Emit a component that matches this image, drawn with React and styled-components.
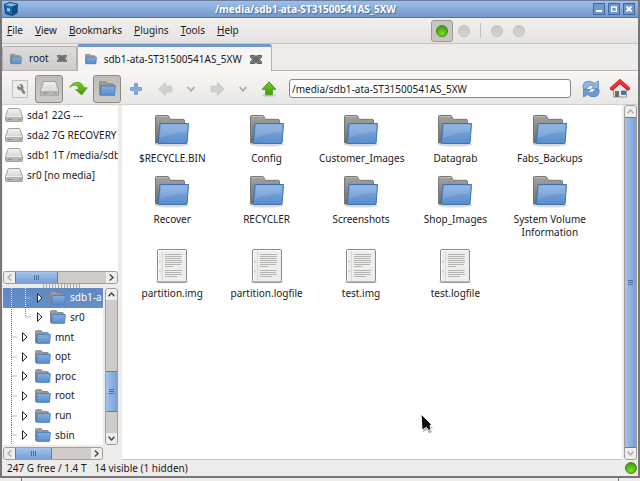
import React, { useState } from 'react';
import styled, { createGlobalStyle, css } from 'styled-components';

const GlobalStyle = createGlobalStyle`
  * {
    box-sizing: border-box;
  }

  body {
    margin: 0;
    background: #edeceb;
    color: #1a1a1a;
    font: 10px/13px "Noto Sans", "Open Sans", sans-serif;
  }

  button, input {
    font: inherit;
    color: inherit;
    margin: 0;
    padding: 0;
  }

  svg {
    display: block;
    flex: none;
  }
`;

const Window = styled.div`
  height: 100vh;
  display: flex;
  flex-direction: column;
  overflow: hidden;
`;

const Frame = styled.div`
  flex: 1;
  min-height: 0;
  display: flex;
  flex-direction: column;
  border: solid #77777b;
  border-width: 0 2px 2px;
`;

const TitleBar = styled.header`
  height: 18px;
  display: flex;
  align-items: center;
  padding: 0 3px 0 2px;
  background: linear-gradient(#9dbfe9, #7299cb);
  border-top: 1px solid #6a7d9a;
  border-bottom: 1px solid #5576a5;
`;

const Title = styled.h1`
  flex: 1;
  margin: 0;
  font-size: 10px;
  line-height: 16px;
  font-weight: 700;
  text-align: center;
  color: #fff;
  text-shadow: 1px 1px 1px #4668a0;
`;

const WindowButtons = styled.div`
  display: flex;
  gap: 3px;
`;

const WindowButton = styled.button`
  width: 12px;
  height: 12px;
  display: flex;
  align-items: center;
  justify-content: center;
  background: #7198cd;
  border: 1px solid #3f66a0;
`;

const MenuBar = styled.nav`
  height: 26px;
  display: flex;
  align-items: center;
  background: linear-gradient(#f1f0ef, #e4e3e2);
  border-bottom: 1px solid #c5c3c1;
`;

const MenuList = styled.div`
  width: 429px;
  display: flex;
  gap: 12px;
  padding-left: 5px;
`;

const MenuButton = styled.button`
  background: none;
  border: 0;

  &::first-letter {
    text-decoration: underline;
  }
`;

const DotButton = styled.button`
  width: 22px;
  height: 22px;
  display: flex;
  align-items: center;
  justify-content: center;
  border: 1px solid ${(p) => (p.$on ? '#9c9894' : 'transparent')};
  border-radius: 3px;
  background: ${(p) => (p.$on ? '#c9c5c2' : 'none')};
`;

const Dot = styled.span`
  width: 12px;
  height: 12px;
  border-radius: 50%;
  ${(p) => (p.$on ? css`
    background: radial-gradient(circle at 50% 75%, #7be014, #4fae10 60%, #3c8b12);
    border: 1px solid #3f8a1c;
  ` : css`
    background: linear-gradient(#c6c8c4, #d3d5d1);
    border: 1px solid #c0c2be;
  `)}
`;

const Separator = styled.span`
  width: 1px;
  height: 15px;
  margin: 0 5px;
  background: #c2c0be;
`;

const TabStrip = styled.div`
  height: 27px;
  display: flex;
  align-items: flex-end;
  background: #edeceb;
  border-bottom: 1px solid #b7b0ac;
`;

const Tab = styled.div`
  display: flex;
  align-items: center;
  gap: 8px;
  padding: 0 9px 0 7px;
  height: 24px;
  border: 1px solid #b7b0ac;
  border-bottom: 0;
  border-radius: 3px 3px 0 0;
  background: linear-gradient(#dddbd9, #cfcccb);

  ${(p) => p.$active && css`
    height: 27px;
    margin-bottom: -1px;
    padding: 0 9px 0 7px;
    background: #f6f5f4;
    border-top: 3px solid #7499cc;
  `}
`;

const TabLabel = styled.button`
  display: flex;
  align-items: center;
  gap: 7px;
  background: none;
  border: 0;
`;

const CloseButton = styled.button`
  background: none;
  border: 0;
`;

const Toolbar = styled.div`
  height: 34px;
  display: flex;
  align-items: center;
  gap: 1px;
  padding: 2px 4px 0;
  background: linear-gradient(#f8f7f6, #e8e7e6);
  border-bottom: 1px solid #d2d0ce;
`;

const ToolButton = styled.button`
  flex: none;
  width: ${(p) => (p.$narrow ? 22 : 28)}px;
  height: 28px;
  display: flex;
  align-items: center;
  justify-content: center;
  border: 1px solid ${(p) => (p.$on ? '#8f8a86' : 'transparent')};
  border-radius: 3px;
  background: ${(p) => (p.$on ? 'linear-gradient(#bfbbb8, #cecbc9)' : 'none')};
`;

const PathInput = styled.input`
  flex: 1;
  min-width: 0;
  height: 19px;
  margin: 0 5px;
  padding: 0 2px;
  background: #fff;
  border: 1px solid #8b8784;
  border-radius: 3px;
  outline: none;
`;

const Body = styled.div`
  flex: 1;
  min-height: 0;
  display: grid;
  grid-template-columns: 115px minmax(0, 1fr) auto;
  padding: 0 1px;
`;

const Sidebar = styled.aside`
  display: grid;
  grid-template-columns: minmax(0, 1fr);
  grid-template-rows: 51fr 4px 49fr;
  min-height: 0;
`;

const Grip = styled.div`
  width: 38px;
  margin: 0 auto;
  background: radial-gradient(circle, #aaa7a5 1px, transparent 1px) 0 0 / 3px 2px;
`;

const Pane = styled.section`
  display: flex;
  flex-direction: column;
  min-height: 0;
`;

const DeviceList = styled.ul`
  flex: 1;
  margin: 0;
  padding: 0;
  list-style: none;
  background: #fff;
  overflow: hidden;
`;

const Device = styled.li`
  height: 20px;
  display: flex;
  align-items: center;
  gap: 4px;
  padding-left: 2px;
  white-space: nowrap;
`;

const TreeArea = styled.div`
  display: grid;
  grid-template-columns: minmax(0, 1fr) 13px;
  grid-template-rows: minmax(0, 1fr) 13px;
  gap: 2px;
  min-height: 0;
`;

const Tree = styled.ul`
  margin: 0;
  padding: 0;
  list-style: none;
  display: grid;
  grid-template-columns: minmax(0, 1fr);
  grid-auto-rows: minmax(0, 1fr);
  background: #fff;
  overflow: hidden;
`;

const TreeRow = styled.li`
  display: flex;
  align-items: center;
  overflow: hidden;
  white-space: nowrap;
  color: ${(p) => (p.$selected ? '#fff' : 'inherit')};
  background: ${(p) => (p.$selected ? 'linear-gradient(#6089c4, #648ec8)' : 'none')};
`;

const TreeLabel = styled.span`
  margin-left: 4px;
`;

const FilePane = styled.main`
  position: relative;
  margin-left: 4px;
  margin-right: 2px;
  padding: 9px 25px 0 3px;
  background: #fff;
  border-bottom: 1px solid #c8c6c4;
`;

const FileGrid = styled.ul`
  margin: 0;
  padding: 0;
  list-style: none;
  display: grid;
  grid-template-columns: repeat(5, 1fr);
  row-gap: 10px;
`;

const FileItem = styled.li`
  display: flex;
  flex-direction: column;
  align-items: center;
  gap: 4px;
  text-align: center;
`;

const FileName = styled.span`
  max-width: 84px;
`;

const Pointer = styled.svg`
  position: absolute;
  left: 298px;
  top: 308px;
`;

const ScrollTrack = styled.div`
  display: flex;
  flex-direction: ${(p) => (p.$vertical ? 'column' : 'row')};
  ${(p) => (p.$vertical ? 'width' : 'height')}: 13px;
  background: #cecbc9;
  border: 1px solid #a29d99;
  border-radius: 3px;
  overflow: hidden;
`;

const ScrollButton = styled.button`
  flex: 0 0 11px;
  display: flex;
  align-items: center;
  justify-content: center;
  background: #efeeed;
  border: 0;
`;

const ScrollGap = styled.div`
  flex: ${(p) => p.$size};
`;

const ScrollThumb = styled.div`
  flex: ${(p) => p.$size};
  display: flex;
  align-items: center;
  justify-content: center;
  background: linear-gradient(${(p) => (p.$vertical ? 'to right' : 'to bottom')}, #a5c3ed, #789fd3);
  border: 1px solid #567fb8;
  ${(p) => (p.$vertical ? 'border-left: 0; border-right: 0;' : 'border-top: 0; border-bottom: 0;')}
`;

const StatusBar = styled.footer`
  height: 16px;
  display: flex;
  align-items: center;
  gap: 8px;
  padding: 0 1px 0 5px;
  background: #edeceb;
`;

const StatusDot = styled(Dot)`
  margin-left: auto;
`;

const Taskbar = styled.div`
  height: 3px;
  display: flex;
  justify-content: space-between;
  padding: 0 21px;
  background: #edeceb;
`;

const TaskbarMark = styled.span`
  width: 1px;
  background: #77777b;
`;

const Defs = styled.svg`
  position: absolute;
`;

const Gradients = () => (
  <Defs width="0" height="0" aria-hidden="true">
    <defs>
      <linearGradient id="blue" x1="0" y1="0" x2="0" y2="1">
        <stop offset="0" stopColor="#86aee0" />
        <stop offset="1" stopColor="#588dcb" />
      </linearGradient>
      <linearGradient id="grey" x1="0" y1="0" x2="0" y2="1">
        <stop offset="0" stopColor="#a3a3a1" />
        <stop offset="1" stopColor="#6c6c6a" />
      </linearGradient>
      <linearGradient id="metal" x1="0" y1="0" x2="0" y2="1">
        <stop offset="0" stopColor="#f4f4f3" />
        <stop offset="1" stopColor="#c4c4c2" />
      </linearGradient>
      <linearGradient id="green" x1="0" y1="0" x2="0" y2="1">
        <stop offset="0" stopColor="#79cc28" />
        <stop offset="1" stopColor="#3f980b" />
      </linearGradient>
    </defs>
  </Defs>
);

const SmallFolder = ({ size = 16 }) => (
  <svg width={size} height={size} viewBox="0 0 16 16">
    <path d="M.5 13.5v-11q0-.8.8-.8h5l1.4 1.8h4.8q.8 0 .8.8v9.2z" fill="url(#grey)" stroke="#878785" />
    <path d="M2.3 5.5h13l-.8 8.8H1.6z" fill="url(#blue)" stroke="#5184c2" />
  </svg>
);

const BigFolder = () => (
  <svg width="36" height="34" viewBox="0 0 36 34">
    <ellipse cx="18" cy="30.500" rx="17" ry="2" fill="#000" opacity=".15" />
    <path d="M1.500 29v-26.500q0-1 1-1h11q1 0 1.300.8l.9 2.200q.4.8 1.300.8h12q1.500 0 1.500 1.500v22z" fill="url(#grey)" stroke="#777775" />
    <path d="M2.500 2.500h11" stroke="#b9b9b7" />
    <path d="M6 9.500h28.500l-1.400 19.200q-.1.8-1 .8H5q-.9 0-.8-.8z" fill="url(#blue)" stroke="#3f72b4" />
    <path d="M7 11h26.300l-.5 7q-14 .5-26.700 6z" fill="#fff" opacity=".13" />
  </svg>
);

const DocumentIcon = () => (
  <svg width="32" height="34" viewBox="0 0 32 34">
    <ellipse cx="16" cy="33" rx="16" ry="1.300" fill="#000" opacity=".35" />
    <rect x="1.500" y=".5" width="29" height="32.500" rx="1.500" fill="#eeeeed" stroke="#888886" />
    <path d="M2.500 32V1.500h27" fill="none" stroke="#fff" />
    <path d="M6.500 2v30" stroke="#d8d8d6" />
    <path d="M4 11.500v2M4 21.500v2" stroke="#aaa" />
    <path d="M9 5.500h17M9 7.500h17M9 9.500h16M9 11.500h17M9 13.500h17M9 15.500h16M9 17.500h8M9 21.500h17M9 23.500h16M9 25.500h17M9 27.500h12" stroke="#b4b4b2" />
  </svg>
);

const DriveIcon = ({ size = 18 }) => (
  <svg width={size} height={size * 14 / 18} viewBox="0 0 18 14">
    <path d="M4 .5h10q.8 0 1 .8l2.500 7.400v4.100q0 .7-.7.7H1.200q-.7 0-.7-.7V8.700L3 1.300Q3.200.5 4 .5z" fill="url(#metal)" stroke="#a2a2a0" />
    <path d="M1 9h16v4H1z" fill="#b5b5b3" />
    <path d="M1 8.500h16" stroke="#eee" />
    <path d="M3 11.500h4M14 11.500h1.500" stroke="#8c8c8a" />
  </svg>
);

const AppIcon = () => (
  <svg width="14" height="14" viewBox="0 0 14 14">
    <path d="M.5 2.500 6 .5l7.500 1.500-.5 9-5 2.500-6.500-2z" fill="#1c66a8" stroke="#134370" />
    <path d="M1 3l7 1.500 5-2.200L6 1z" fill="#7db9e6" />
    <path d="M8 5l5-2.200-.4 7.800L8 13z" fill="#124a83" />
    <path d="M3 6l3 .6v3L3 9z" fill="#8cc7ef" />
  </svg>
);

const CloseIcon = ({ size }) => (
  <svg width={size} height={size - 3} viewBox="0 0 12 9" preserveAspectRatio="none">
    <path d="M.5.5h4L6 1.500 7.500.5h4V2L9.500 4.500l2 2.500v1.500h-4L6 7.500 4.500 8.500h-4V7l2-2.500L.5 2z" fill="#858583" stroke="#5c5c5a" />
    <path d="M3 2l6 5M9 2 3 7" stroke="#666664" strokeWidth="2" />
  </svg>
);

const WrenchIcon = () => (
  <svg width="16" height="18" viewBox="0 0 16 18">
    <rect x=".5" y=".5" width="15" height="17" fill="#ececeb" stroke="#c2c0be" />
    <path d="M5.500 5.500 8 7.500 9 6.500 7 4q4-.5 4.500 3 0 1-.4 2l2 3q.5 1.500-.6 2-1.100.3-1.900-.7L9 10.200q-3.500.3-4-2.700 0-1 .5-2z" fill="#858583" />
  </svg>
);

const JumpIcon = () => (
  <svg width="19" height="16" viewBox="0 0 19 16">
    <path d="M.7 6.500C3 .8 12.200-1.500 15 6.800h3.300L12.700 14 6.500 8.500h3.200C9.500 3.500 4.500 3 .7 6.500z" fill="url(#green)" stroke="#51a61b" strokeWidth=".8" />
  </svg>
);

const PlusIcon = () => (
  <svg width="12" height="12" viewBox="0 0 12 12">
    <path d="M4.500.5h3v4h4v3h-4v4h-3v-4h-4v-3h4z" fill="#84abdd" stroke="#7da3d6" />
  </svg>
);

const ArrowIcon = ({ flip }) => (
  <svg width="15" height="14" viewBox="0 0 15 14">
    <path d="M.8 7 7.500.8v3.400h6.300v5.600H7.500v3.400z" fill="#cfd3cc" stroke="#c4c9c1" transform={flip ? 'rotate(180 7.5 7)' : undefined} />
  </svg>
);

const UpIcon = () => (
  <svg width="16" height="16" viewBox="0 0 16 16">
    <ellipse cx="8" cy="14.500" rx="7" ry="1.500" fill="#000" opacity=".13" />
    <path d="M8 .8l6.800 7.500h-3.500v5.500H4.700V8.300H1.200z" fill="url(#green)" stroke="#469c14" />
  </svg>
);

const ReloadIcon = () => (
  <svg width="18" height="18" viewBox="0 0 18 18">
    <path d="M1 8.500V5.500Q1.500 1.500 6 1.200q4-.2 6.500 2.300L16.500 1v7.500H9.500l2.200-2.300Q7.500 3.500 5 8.500z" fill="#8db3e3" stroke="#5a8cc8" strokeWidth=".8" />
    <path d="M17 9.500v3q-.5 4-5 4.300-4 .2-6.500-2.300L1.500 17V9.500h7L6.300 11.800q4.200 2.700 6.700-2.300z" fill="#6e9ad2" stroke="#487cb9" strokeWidth=".8" />
  </svg>
);

const HomeIcon = () => (
  <svg width="20" height="19" viewBox="0 0 20 19">
    <path d="M3.500 9.500 10 4l6.500 5.500v8.500h-13z" fill="#e8e8e6" stroke="#999" />
    <path d="M5 12h4v6H5z" fill="#716c61" />
    <path d="M11.500 12h4v3.500h-4z" fill="#4479bd" stroke="#285486" strokeWidth=".6" />
    <path d="M2 9.500 10 2.500l8 7" fill="none" stroke="#c8191d" strokeWidth="4" strokeLinecap="round" />
    <path d="M2 9 10 2l8 7" fill="none" stroke="#ee3535" strokeWidth="2.500" strokeLinecap="round" />
  </svg>
);

const turns = { up: 180, down: 0, left: 90, right: -90 };

const Chevron = ({ dir = 'down', color = '#444', size = 7 }) => (
  <svg width={size} height={size} viewBox="0 0 6 6">
    <path d="M.5 1.500 3 4.300l2.500-2.800" fill="none" stroke={color} strokeWidth="1.200" transform={`rotate(${turns[dir]} 3 3)`} />
  </svg>
);

const ThumbGrip = ({ vertical }) => (
  <svg width="7" height="7" viewBox="0 0 7 7">
    <path d="M1.500 1v5M3.500 1v5M5.500 1v5" stroke="#466fa9" transform={vertical ? 'rotate(90 3.5 3.5)' : undefined} />
  </svg>
);

// dotted guide lines and the expander arrow in front of each tree entry
const Branch = ({ nested, last, selected }) => {
  const line = { stroke: selected ? '#dde6f4' : '#777', strokeDasharray: '1 1' };
  return (
    <svg width={nested ? 47 : 32} height="20" viewBox={`0 0 ${nested ? 47 : 32} 20`}>
      <path d="M8.500 0v20" {...line} />
      {nested && <path d={last ? 'M22.500 0v10h6' : 'M22.500 0v20M22.500 10h6'} fill="none" {...line} />}
      {!nested && <path d="M8.500 10h6" {...line} />}
      <path
        d="M.5.7v8.600L5 5z"
        fill="#fff"
        stroke="#222"
        transform={`translate(${nested ? 34 : 19} 5)`}
      />
    </svg>
  );
};

const Scrollbar = ({ vertical, before, thumb, after, startColor = '#444', endColor = '#444' }) => (
  <ScrollTrack $vertical={vertical}>
    <ScrollButton aria-label={vertical ? 'Scroll up' : 'Scroll left'}>
      <Chevron dir={vertical ? 'up' : 'left'} color={startColor} />
    </ScrollButton>
    <ScrollGap $size={before} />
    <ScrollThumb $size={thumb} $vertical={vertical}>
      <ThumbGrip vertical={vertical} />
    </ScrollThumb>
    <ScrollGap $size={after} />
    <ScrollButton aria-label={vertical ? 'Scroll down' : 'Scroll right'}>
      <Chevron dir={vertical ? 'down' : 'right'} color={endColor} />
    </ScrollButton>
  </ScrollTrack>
);

const menus = ['File', 'View', 'Bookmarks', 'Plugins', 'Tools', 'Help'];

const devices = ['sda1 22G ---', 'sda2 7G RECOVERY', 'sdb1 1T /media/sdb', 'sr0 [no media]'];

const tree = [
  { name: 'sdb1-a', nested: true, selected: true },
  { name: 'sr0', nested: true, last: true },
  { name: 'mnt' },
  { name: 'opt' },
  { name: 'proc' },
  { name: 'root' },
  { name: 'run' },
  { name: 'sbin' },
];

const folders = [
  '$RECYCLE.BIN', 'Config', 'Customer_Images', 'Datagrab', 'Fabs_Backups',
  'Recover', 'RECYCLER', 'Screenshots', 'Shop_Images', 'System Volume Information',
];

const files = ['partition.img', 'partition.logfile', 'test.img', 'test.logfile'];

const App = () => {
  const [path, setPath] = useState('/media/sdb1-ata-ST31500541AS_5XW');

  return (
    <Window>
      <GlobalStyle />
      <Gradients />
      <Frame>
        <TitleBar>
          <AppIcon />
          <Title>/media/sdb1-ata-ST31500541AS_5XW</Title>
          <WindowButtons>
            <WindowButton aria-label="Minimize">
              <svg width="6" height="6"><path d="M0 5h6" stroke="#fff" strokeWidth="2" /></svg>
            </WindowButton>
            <WindowButton aria-label="Maximize">
              <svg width="6" height="6"><path d="M.5 1h5v4.500h-5z" fill="none" stroke="#fff" strokeWidth="1.500" /></svg>
            </WindowButton>
            <WindowButton aria-label="Close">
              <svg width="6" height="6"><path d="M.5.5l5 5M5.500.5l-5 5" stroke="#fff" strokeWidth="2" /></svg>
            </WindowButton>
          </WindowButtons>
        </TitleBar>

        <MenuBar>
          <MenuList>
            {menus.map((name) => <MenuButton key={name}>{name}</MenuButton>)}
          </MenuList>
          <DotButton $on aria-label="Panel 1"><Dot $on /></DotButton>
          <DotButton aria-label="Panel 2"><Dot /></DotButton>
          <Separator />
          <DotButton aria-label="Panel 3"><Dot /></DotButton>
          <DotButton aria-label="Panel 4"><Dot /></DotButton>
        </MenuBar>

        <TabStrip>
          <Tab>
            <TabLabel><SmallFolder size={12} />root</TabLabel>
            <CloseButton aria-label="Close root"><CloseIcon size={10} /></CloseButton>
          </Tab>
          <Tab $active>
            <TabLabel><SmallFolder size={12} />sdb1-ata-ST31500541AS_5XW</TabLabel>
            <CloseButton aria-label="Close sdb1"><CloseIcon size={12} /></CloseButton>
          </Tab>
        </TabStrip>

        <Toolbar>
          <ToolButton aria-label="Settings"><WrenchIcon /></ToolButton>
          <ToolButton $on aria-label="Devices"><DriveIcon size={19} /></ToolButton>
          <ToolButton aria-label="Bookmarks"><JumpIcon /></ToolButton>
          <ToolButton $on aria-label="Tree"><SmallFolder size={17} /></ToolButton>
          <ToolButton aria-label="New tab"><PlusIcon /></ToolButton>
          <ToolButton aria-label="Back"><ArrowIcon /></ToolButton>
          <ToolButton $narrow aria-label="Back history"><Chevron color="#a9a7a5" size={8} /></ToolButton>
          <ToolButton aria-label="Forward"><ArrowIcon flip /></ToolButton>
          <ToolButton $narrow aria-label="Forward history"><Chevron color="#a9a7a5" size={8} /></ToolButton>
          <ToolButton aria-label="Up"><UpIcon /></ToolButton>
          <PathInput aria-label="Path" value={path} onChange={(e) => setPath(e.target.value)} />
          <ToolButton aria-label="Refresh"><ReloadIcon /></ToolButton>
          <ToolButton aria-label="Home"><HomeIcon /></ToolButton>
        </Toolbar>

        <Body>
          <Sidebar>
            <Pane>
              <DeviceList>
                {devices.map((name) => (
                  <Device key={name}><DriveIcon />{name}</Device>
                ))}
              </DeviceList>
              <Scrollbar before={0} thumb={42} after={49} startColor="#aaa" />
            </Pane>
            <Grip />
            <TreeArea>
              <Tree>
                {tree.map(({ name, ...row }) => (
                  <TreeRow key={name} $selected={row.selected}>
                    <Branch {...row} />
                    <SmallFolder />
                    <TreeLabel>{name}</TreeLabel>
                  </TreeRow>
                ))}
              </Tree>
              <Scrollbar vertical before={73} thumb={40} after={21} />
              <Scrollbar before={0} thumb={36} after={40} startColor="#aaa" />
            </TreeArea>
          </Sidebar>

          <FilePane>
            <FileGrid>
              {folders.map((name) => (
                <FileItem key={name}><BigFolder /><FileName>{name}</FileName></FileItem>
              ))}
              {files.map((name) => (
                <FileItem key={name}><DocumentIcon /><FileName>{name}</FileName></FileItem>
              ))}
            </FileGrid>
            <Pointer width="16" height="24" viewBox="0 0 16 24">
              <path d="M2 4l11 11-2.500.5 1.500 3.500-3 1.500-2-3.500L3 19z" fill="#000" opacity=".3" />
              <path d="M1 1l10.500 10.500-1.500 1 1 4-2.500 1-2-3-4.500 2.500z" fill="#111" stroke="#fff" />
            </Pointer>
          </FilePane>

          <Scrollbar vertical before={0} thumb={330} after={0} startColor="#aaa" endColor="#aaa" />
        </Body>

        <StatusBar>
          <span>247 G free / 1.4 T</span>
          <span>14 visible (1 hidden)</span>
          <StatusDot $on />
        </StatusBar>
      </Frame>
      <Taskbar>
        <TaskbarMark />
        <TaskbarMark />
      </Taskbar>
    </Window>
  );
};

export default App;
